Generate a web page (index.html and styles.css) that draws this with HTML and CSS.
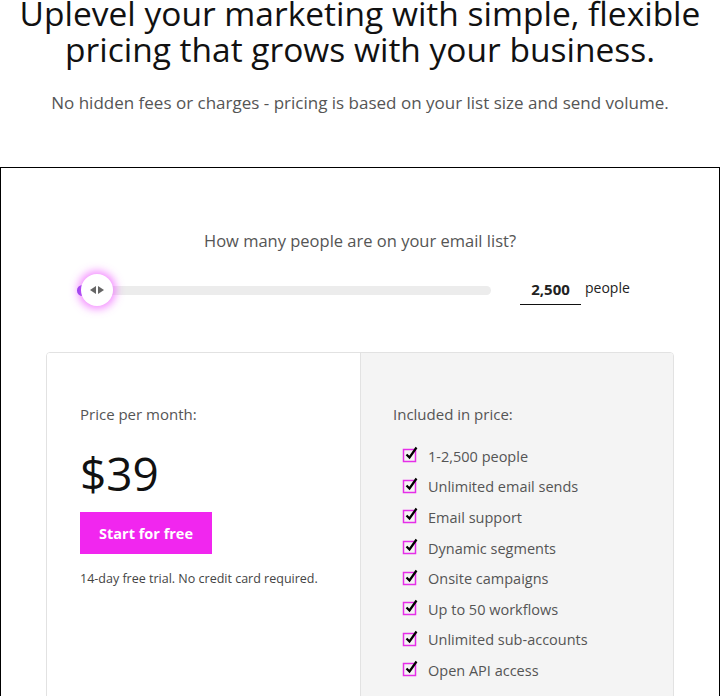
FILE: index.html
```html
<!DOCTYPE html>
<html lang="en">
<head>
<meta charset="utf-8">
<title>Pricing</title>
<link rel="stylesheet" href="styles.css">
</head>
<body>
  <header class="intro">
    <h1 class="intro-title">Uplevel your marketing with simple, flexible pricing that grows with your business.</h1>
    <p class="intro-sub">No hidden fees or charges - pricing is based on your list size and send volume.</p>
  </header>

  <section class="calculator">
    <p class="calc-question">How many people are on your email list?</p>

    <div class="slider-row">
      <div class="slider">
        <span class="slider-fill"></span>
        <span class="slider-thumb">
          <span class="arrow arrow-left"></span>
          <span class="arrow arrow-right"></span>
        </span>
      </div>
      <div class="count">
        <span class="count-value">2,500</span>
      </div>
      <span class="count-unit">people</span>
    </div>

    <div class="plan">
      <div class="plan-price">
        <p class="plan-label">Price per month:</p>
        <p class="plan-amount">$39</p>
        <a class="plan-cta" href="#">Start for free</a>
        <p class="plan-note">14-day free trial. No credit card required.</p>
      </div>
      <div class="plan-features">
        <p class="plan-label">Included in price:</p>
        <ul class="feature-list">
          <li><svg class="check" viewBox="0 0 18 18" width="18" height="18"><rect x="1.5" y="4.5" width="12" height="12" fill="none" stroke="#e52ee8" stroke-width="1.5"/><path d="M4.5 9.5 L7.5 12.5 L14.5 2.5" fill="none" stroke="#000" stroke-width="2.2"/></svg>1-2,500 people</li>
          <li><svg class="check" viewBox="0 0 18 18" width="18" height="18"><rect x="1.5" y="4.5" width="12" height="12" fill="none" stroke="#e52ee8" stroke-width="1.5"/><path d="M4.5 9.5 L7.5 12.5 L14.5 2.5" fill="none" stroke="#000" stroke-width="2.2"/></svg>Unlimited email sends</li>
          <li><svg class="check" viewBox="0 0 18 18" width="18" height="18"><rect x="1.5" y="4.5" width="12" height="12" fill="none" stroke="#e52ee8" stroke-width="1.5"/><path d="M4.5 9.5 L7.5 12.5 L14.5 2.5" fill="none" stroke="#000" stroke-width="2.2"/></svg>Email support</li>
          <li><svg class="check" viewBox="0 0 18 18" width="18" height="18"><rect x="1.5" y="4.5" width="12" height="12" fill="none" stroke="#e52ee8" stroke-width="1.5"/><path d="M4.5 9.5 L7.5 12.5 L14.5 2.5" fill="none" stroke="#000" stroke-width="2.2"/></svg>Dynamic segments</li>
          <li><svg class="check" viewBox="0 0 18 18" width="18" height="18"><rect x="1.5" y="4.5" width="12" height="12" fill="none" stroke="#e52ee8" stroke-width="1.5"/><path d="M4.5 9.5 L7.5 12.5 L14.5 2.5" fill="none" stroke="#000" stroke-width="2.2"/></svg>Onsite campaigns</li>
          <li><svg class="check" viewBox="0 0 18 18" width="18" height="18"><rect x="1.5" y="4.5" width="12" height="12" fill="none" stroke="#e52ee8" stroke-width="1.5"/><path d="M4.5 9.5 L7.5 12.5 L14.5 2.5" fill="none" stroke="#000" stroke-width="2.2"/></svg>Up to 50 workflows</li>
          <li><svg class="check" viewBox="0 0 18 18" width="18" height="18"><rect x="1.5" y="4.5" width="12" height="12" fill="none" stroke="#e52ee8" stroke-width="1.5"/><path d="M4.5 9.5 L7.5 12.5 L14.5 2.5" fill="none" stroke="#000" stroke-width="2.2"/></svg>Unlimited sub-accounts</li>
          <li><svg class="check" viewBox="0 0 18 18" width="18" height="18"><rect x="1.5" y="4.5" width="12" height="12" fill="none" stroke="#e52ee8" stroke-width="1.5"/><path d="M4.5 9.5 L7.5 12.5 L14.5 2.5" fill="none" stroke="#000" stroke-width="2.2"/></svg>Open API access</li>
        </ul>
      </div>
    </div>
  </section>
</body>
</html>
```

FILE: styles.css
```css
* {
  box-sizing: border-box;
}

body {
  margin: 0;
  width: 720px;
  font-family: "Open Sans", "DejaVu Sans", sans-serif;
  color: #222;
  background: #fff;
}

p {
  margin: 0;
}

/* Intro heading */
.intro {
  text-align: center;
  padding-bottom: 53px;
}

.intro-title {
  margin: -5px 0 0;
  font-size: 33.5px;
  line-height: 36px;
  font-weight: 400;
  color: #111;
  padding: 0 8px;
}

.intro-sub {
  margin-top: 25px;
  font-size: 17px;
  line-height: 22px;
  color: #555;
}

/* Calculator box */
.calculator {
  border: 1px solid #000;
  border-bottom: none;
  padding: 62px 45px 0;
  height: 540px;
}

.calc-question {
  text-align: center;
  font-size: 16.5px;
  line-height: 22px;
  color: #555;
}

.slider-row {
  display: flex;
  align-items: center;
  margin-top: 16px;
  padding-left: 33px;
  height: 44px;
}

.slider {
  position: relative;
  width: 412px;
  height: 9px;
  border-radius: 5px;
  background: #ececec;
}

.slider-fill {
  position: absolute;
  left: -2px;
  top: -1px;
  width: 14px;
  height: 11px;
  border-radius: 6px;
  background: #7a3ee8;
}

.slider-thumb {
  position: absolute;
  left: 2px;
  top: 50%;
  width: 32px;
  height: 32px;
  margin-top: -16px;
  border-radius: 50%;
  background: #fff;
  box-shadow: 0 0 8px 3px rgba(238, 90, 255, 0.7);
  display: flex;
  align-items: center;
  justify-content: center;
  gap: 2px;
}

.arrow {
  width: 0;
  height: 0;
  border-top: 4.5px solid transparent;
  border-bottom: 4.5px solid transparent;
}

.arrow-left {
  border-right: 6px solid #666;
}

.arrow-right {
  border-left: 6px solid #666;
}

.count {
  margin-left: 29px;
  width: 61px;
  border-bottom: 1.5px solid #111;
  text-align: center;
  padding: 2px 0 4px;
}

.count-value {
  font-size: 15px;
  font-weight: 700;
  color: #222;
}

.count-unit {
  margin-left: 4px;
  font-size: 14px;
  color: #222;
  margin-top: -5px;
}

/* Plan card */
.plan {
  margin-top: 40px;
  display: grid;
  grid-template-columns: 314px 1fr;
  border: 1px solid #e2e2e2;
  border-radius: 4px;
  overflow: hidden;
  height: 400px;
}

.plan-price {
  background: #fff;
  padding: 50px 0 0 33px;
  border-right: 1px solid #e2e2e2;
}

.plan-features {
  background: #f4f4f4;
  padding: 50px 0 0 32px;
}

.plan-label {
  font-size: 15px;
  line-height: 22px;
  color: #555;
}

.plan-amount {
  margin-top: 22px;
  font-size: 46px;
  line-height: 52px;
  font-weight: 400;
  color: #111;
}

.plan-cta {
  display: inline-flex;
  align-items: center;
  justify-content: center;
  margin-top: 13px;
  width: 132px;
  height: 42px;
  background: #f126ef;
  color: #fff;
  font-size: 14.5px;
  font-weight: 700;
  text-decoration: none;
}

.plan-note {
  margin-top: 16px;
  font-size: 12.5px;
  line-height: 18px;
  color: #444;
}

.feature-list {
  list-style: none;
  margin: 16px 0 0;
  padding: 0 0 0 9px;
}

.feature-list li {
  display: flex;
  align-items: center;
  height: 30.6px;
  font-size: 14.5px;
  color: #555;
}

.check {
  flex: none;
  margin-right: 8px;
  margin-top: -4px;
}
```
